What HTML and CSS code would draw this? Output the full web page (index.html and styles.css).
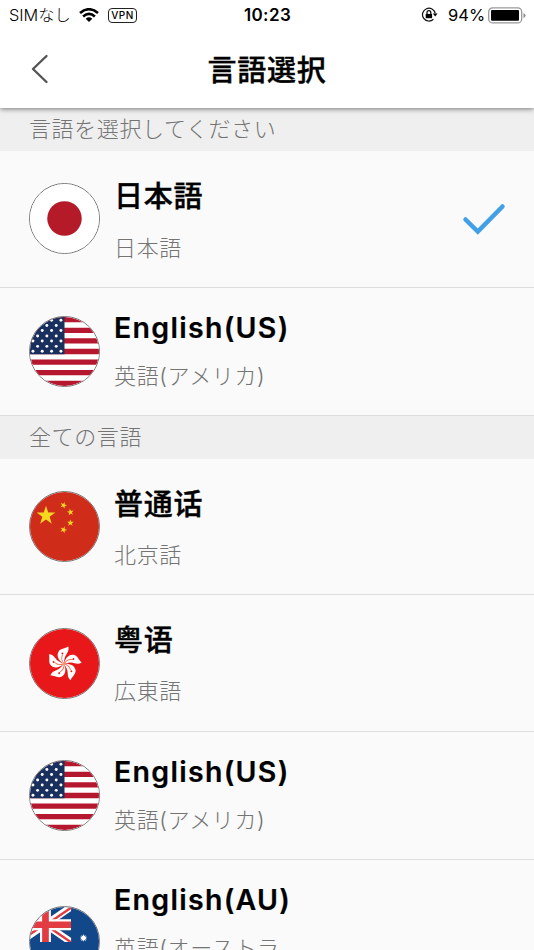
FILE: index.html
```html
<!DOCTYPE html>
<html lang="ja">
<head>
<meta charset="utf-8">
<title>言語選択</title>
<link rel="stylesheet" href="styles.css">
</head>
<body>
<svg class="defs" aria-hidden="true">
  <defs>
    <path id="star" d="M0-10 2.3-3.1H9.5L3.7 1.2 5.9 8.1 0 3.8-5.9 8.1-3.7 1.2-9.5-3.1H-2.3Z"/>
    <g id="dots3"><circle cx="7.7" r="1.5"/><circle cx="17.1" r="1.5"/><circle cx="26.6" r="1.5"/></g>
    <g id="dots4"><circle cx="3" r="1.5"/><circle cx="12.4" r="1.5"/><circle cx="21.9" r="1.5"/><circle cx="31.4" r="1.5"/></g>
    <symbol id="us" viewBox="0 0 70 70">
      <path fill="#fff" d="M0 0H70V70H0Z"/>
      <path stroke="#b5172e" stroke-width="5.4" d="M0 2.7H70M0 13.5H70M0 24.2H70M0 35H70M0 45.8H70M0 56.5H70M0 67.3H70"/>
      <path fill="#19305f" d="M0 0H35V37.8H0Z"/>
      <g fill="#fff">
        <use href="#dots4" y="3.2"/><use href="#dots3" y="8.6"/><use href="#dots4" y="13.8"/><use href="#dots3" y="19.2"/><use href="#dots4" y="24.4"/><use href="#dots3" y="29.8"/><use href="#dots4" y="34.8"/>
      </g>
    </symbol>
    <path id="petal" fill="#fff" d="M0 0C-4.500-2.500-8.200-7.500-5.600-12.300C-3.800-15.600 1-15.300 4.400-17.500C5-15 4.400-12.500 2.800-10.300C.2-7 .4-4 0 0Z"/>
    <path id="vein" fill="none" stroke="#ef7a58" stroke-width="1" d="M0 0C-2.500-3-3-6-1.600-9"/>
  </defs>
</svg>

<div class="screen">
  <header class="top">
    <div class="status">
      <div class="status-left">
        <span class="carrier">SIMなし</span>
        <svg class="wifi" viewBox="0 0 20 14"><g fill="none" stroke="#000" stroke-width="2.6"><path d="M1 5.100Q10-2.600 19 5.100"/><path d="M4.100 8.400Q10 3.300 15.900 8.400"/></g><path d="M6.700 10.700Q10 7.900 13.300 10.700L10 14Z"/></svg>
        <span class="vpn">VPN</span>
      </div>
      <span class="clock">10:23</span>
      <div class="status-right">
        <svg class="lock" viewBox="0 0 17 16"><path fill="none" stroke="#111" stroke-width="1.200" d="M14.200 6.500A6.400 6.400 0 1 0 12.400 12.200"/><path d="M11.800 6.500H16.600L14.200 9.600Z"/><path d="M4.700 6.900H11.100V11.200H4.700Z"/><path fill="none" stroke="#000" stroke-width="1.200" d="M6 7V5.500A1.900 1.900 0 0 1 9.800 5.500V7"/></svg>
        <span class="percent">94%</span>
        <svg class="battery" viewBox="0 0 38 17"><rect x=".7" y=".9" width="33" height="15" rx="4" fill="#fff" stroke="#999" stroke-width="1.300"/><rect x="3" y="3.100" width="28" height="10.700" rx="1"/><path fill="#888" d="M35.500 6Q37.500 7 37.500 8.500T35.500 11Z"/></svg>
      </div>
    </div>
    <div class="nav">
      <svg class="back" viewBox="0 0 18 30"><path d="M15.500 2 2 15 15.500 28" fill="none" stroke="#555" stroke-width="2.400" stroke-linecap="round" stroke-linejoin="round"/></svg>
      <h1>言語選択</h1>
      <span></span>
    </div>
  </header>

  <main>
    <h2>言語を選択してください</h2>
    <div class="row first">
      <svg class="flag" viewBox="0 0 70 70"><path fill="#fff" d="M0 0H70V70H0Z"/><circle cx="35" cy="35" r="17.500" fill="#b41a28"/></svg>
      <div class="names"><strong>日本語</strong><span>日本語</span></div>
      <svg class="check" viewBox="0 0 44 32"><path d="M3.500 16.500 15.800 28.500 40.500 3.500" fill="none" stroke="#42a0e6" stroke-width="4.500" stroke-linecap="round"/></svg>
    </div>
    <div class="row latin">
      <svg class="flag"><use href="#us"/></svg>
      <div class="names"><strong>English(US)</strong><span>英語(アメリカ)</span></div>
    </div>

    <h2>全ての言語</h2>
    <div class="row">
      <svg class="flag" viewBox="0 0 70 70"><path fill="#d02c1a" d="M0 0H70V70H0Z"/>
        <g fill="#f7d820"><use href="#star" transform="translate(16.200 24)"/><use href="#star" transform="translate(34 13.500) rotate(20) scale(.37)"/><use href="#star" transform="translate(41 20.500) rotate(-10) scale(.37)"/><use href="#star" transform="translate(41 31.300) scale(.37)"/><use href="#star" transform="translate(34 38.300) rotate(20) scale(.37)"/></g>
      </svg>
      <div class="names zh"><strong lang="zh-CN">普通话</strong><span>北京話</span></div>
    </div>
    <div class="row hk">
      <svg class="flag" viewBox="0 0 70 70"><path fill="#e81719" d="M0 0H70V70H0Z"/>
        <g transform="translate(34.500 35.300)">
          <g id="leaf"><use href="#petal"/><use href="#vein"/><circle cx="-1.600" cy="-10.500" r="1" fill="#e81719"/></g>
          <use href="#leaf" transform="rotate(72)"/><use href="#leaf" transform="rotate(144)"/><use href="#leaf" transform="rotate(216)"/><use href="#leaf" transform="rotate(288)"/>
        </g>
      </svg>
      <div class="names zh"><strong lang="zh-CN">粤语</strong><span>広東語</span></div>
    </div>
    <div class="row latin">
      <svg class="flag"><use href="#us"/></svg>
      <div class="names"><strong>English(US)</strong><span>英語(アメリカ)</span></div>
    </div>
    <div class="row latin tall">
      <svg class="flag" viewBox="0 0 70 70"><path fill="#124789" d="M0 0H70V70H0Z"/>
        <svg x="-10.300" y="0" width="52" height="35.500" viewBox="0 0 52 35.500">
          <path stroke="#fff" stroke-width="7" d="M-2-1.500 54 37M54-1.500-2 37"/>
          <path stroke="#e23c42" stroke-width="2.500" d="M-1 0 26 18.600M53 0 26 18.600M-1 35.500 26 17M53 36.500 26 18"/>
          <path stroke="#fff" stroke-width="11" d="M26 0V36M0 18H52"/>
          <path stroke="#e23c42" stroke-width="6.800" d="M26 0V36M0 18H52"/>
        </svg>
        <g fill="#fff"><use href="#star" transform="translate(54.300 31.500) scale(.4)"/><use href="#star" transform="translate(54.300 31.500) rotate(36) scale(.38)"/><use href="#star" transform="translate(15.500 50) scale(.6)"/><use href="#star" transform="translate(54.300 58) scale(.38)"/></g>
      </svg>
      <div class="names"><strong>English(AU)</strong><span>英語(オーストラ</span></div>
    </div>
  </main>
</div>
</body>
</html>
```

FILE: styles.css
```css
* { box-sizing: border-box; }

body {
  margin: 0;
  background: #fafafa;
  color: #000;
  font-family: Inter, "Noto Sans CJK JP", sans-serif;
}

.defs { position: absolute; width: 0; height: 0; }

.screen { height: 950px; overflow: hidden; }

.top {
  position: relative;
  height: 108px;
  background: #fff;
  box-shadow: 0 1px 5px rgba(0, 0, 0, .5);
}

.status {
  display: grid;
  grid-template-columns: 1fr auto 1fr;
  align-items: center;
  height: 30px;
  padding: 0 8px 0 9px;
}

.status-left, .status-right { display: flex; align-items: center; }
.status-right { justify-content: flex-end; }

.carrier {
  width: 70px;
  font-size: 16.3px;
  font-weight: 300;
  white-space: nowrap;
  line-height: 24px;
}

.wifi { width: 20px; height: 14px; }

.vpn {
  width: 29px;
  height: 15px;
  margin-left: 9px;
  border: 1.3px solid #222;
  border-radius: 4px;
  font-size: 10px;
  font-weight: 500;
  letter-spacing: .5px;
  line-height: 13px;
  text-align: center;
}

.clock { font-size: 17px; font-weight: 600; letter-spacing: .4px; }
.lock { width: 17px; height: 16px; margin-right: 10px; }
.percent { width: 40px; font-size: 16.5px; }
.battery { width: 38px; height: 17px; }

.nav {
  display: grid;
  grid-template-columns: 1fr auto 1fr;
  align-items: center;
  height: 78px;
  padding-left: 31px;
  padding-right: 31px;
}

.back { width: 18px; height: 30px; }

h1, .names strong {
  font-size: 29px;
  font-weight: 500;
  letter-spacing: .7px;
  line-height: 40px;
  -webkit-text-stroke: .4px #000;
}

h1 { margin: 0; padding-top: 4px; }

h2 {
  height: 43px;
  margin: 0;
  padding-left: 29px;
  background: #efefef;
  color: #747474;
  font-size: 22px;
  font-weight: 300;
  letter-spacing: .6px;
  line-height: 42px;
}

.row {
  display: flex;
  align-items: center;
  height: 136px;
  padding: 0 28px 0 28.5px;
  border-bottom: 1.5px solid #dedede;
}

.row.first, .row.hk { height: 137px; }
.row.latin { height: 128px; }
.row.tall { height: 163px; }

.flag {
  flex: none;
  width: 71px;
  height: 71px;
  border: 1px solid #777;
  border-radius: 50%;
  overflow: hidden;
}

.names {
  display: flex;
  flex-direction: column;
  gap: 13px;
  flex: 1;
  margin-left: 14.5px;
  padding-top: 4px;
}

.first .names { padding-top: 7px; gap: 11px; }
.hk .names { padding-top: 3px; }
.first .flag { margin-bottom: 1px; }

.names span {
  color: #747474;
  font-size: 22px;
  font-weight: 300;
  letter-spacing: .65px;
  line-height: 40px;
}

.zh strong { font-family: "Noto Sans CJK SC", sans-serif; }

.latin .names { gap: 14px; padding-top: 1px; }
.latin .names strong {
  font-size: 28.5px;
  font-weight: 600;
  letter-spacing: 1.3px;
  line-height: 34px;
  -webkit-text-stroke-width: .2px;
}
.latin .names span { line-height: 34px; }
.latin.tall .names { align-self: flex-start; padding-top: 23px; }

.check { width: 44px; height: 32px; }
```
